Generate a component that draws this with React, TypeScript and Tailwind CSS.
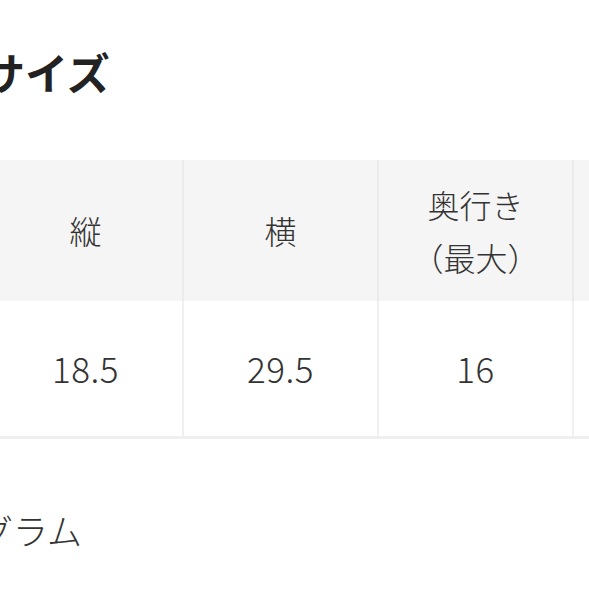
const headers = ["", "縦", "横", "奥行き\n（最大）", ""]
const values = ["", "18.5", "29.5", "16", ""]

export default function App() {
    return (
        <div
            className="w-[589px] h-[589px] overflow-hidden bg-white text-[#333]"
            style={{ fontFamily: '"Noto Sans CJK JP", "Noto Sans", sans-serif' }}
        >
            {/* 見出し */}
            <div className="h-[160px] pt-[43px]">
                <h2 className="ml-[-18px] text-[43px] leading-[56px] font-bold text-[#222] whitespace-nowrap">サイズ</h2>
            </div>

            {/* サイズ表 */}
            <div className="ml-[-206px] w-[1000px]">
                <div className="grid grid-cols-[repeat(5,195px)] bg-[#f5f5f5]">
                    {headers.map((h, i) => (
                        <div
                            key={i}
                            className="h-[141px] flex items-center justify-center border-r-2 border-[#ebebeb] text-[32px] leading-[53px] font-light text-center whitespace-pre-line"
                        >
                            {h}
                        </div>
                    ))}
                </div>
                <div className="grid grid-cols-[repeat(5,195px)] border-b-[3px] border-[#efefef]">
                    {values.map((v, i) => (
                        <div
                            key={i}
                            className="h-[135px] flex items-center justify-center border-r-2 border-[#f0f0f0] text-[35px] font-light tracking-[0.5px]"
                        >
                            {v}
                        </div>
                    ))}
                </div>
            </div>

            <p className="ml-[-22px] mt-[70px] text-[35px] leading-[42px] font-light whitespace-nowrap">グラム</p>
        </div>
    )
}
